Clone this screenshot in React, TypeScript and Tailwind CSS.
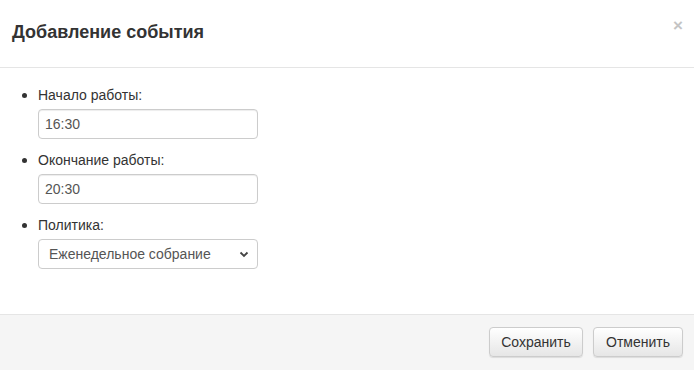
import React from 'react';

const font = { fontFamily: '"Liberation Sans", Arial, sans-serif' };

function Field({ label, children }: { label: string; children: React.ReactNode }) {
  return (
    <li className="mb-[11px] leading-5">
      <div className="h-5 leading-5 text-[14px] text-[#333]">{label}</div>
      <div className="mt-1">{children}</div>
    </li>
  );
}

export default function App() {
  return (
    <div style={font} className="w-[694px] h-[370px] bg-white flex flex-col text-[#333]">
      <div className="h-[68px] border-b border-[#e5e5e5] flex items-center pl-3 pr-3 relative">
        <h4 className="text-[18px] font-bold text-[#333] mt-[-2px]">Добавление события</h4>
        <span className="absolute right-[11px] top-[17px] text-[#c4c4c4] font-bold text-[17px] leading-none">×</span>
      </div>
      <div className="flex-1 pt-[17px]">
        <ul className="list-disc pl-[38px] marker:text-[#333]">
          <Field label="Начало работы:">
            <div className="w-[220px] h-[30px] border border-[#ccc] rounded-[4px] flex items-center px-[6px] text-[14px] text-[#555] shadow-[inset_0_1px_1px_rgba(0,0,0,0.075)]">16:30</div>
          </Field>
          <Field label="Окончание работы:">
            <div className="w-[220px] h-[30px] border border-[#ccc] rounded-[4px] flex items-center px-[6px] text-[14px] text-[#555] shadow-[inset_0_1px_1px_rgba(0,0,0,0.075)]">20:30</div>
          </Field>
          <Field label="Политика:">
            <div className="w-[220px] h-[30px] border border-[#ccc] rounded-[4px] flex items-center justify-between pl-[10px] pr-[8px] text-[14px] text-[#555]">
              <span>Еженедельное собрание</span>
              <svg width="10" height="7" viewBox="0 0 10 7" fill="none">
                <path d="M1.5 1.5 L5 5 L8.5 1.5" stroke="#444" strokeWidth="1.8" />
              </svg>
            </div>
          </Field>
        </ul>
      </div>
      <div className="h-[56px] bg-[#f5f5f5] border-t border-[#e5e5e5] flex items-center justify-end gap-[10px] pr-[11px] pb-[1px]">
        <button className="h-[30px] w-[94px] rounded-[4px] border border-[#ccc] bg-gradient-to-b from-white to-[#e6e6e6] text-[14px] text-[#333] shadow-[0_1px_1px_rgba(0,0,0,0.1)]">Сохранить</button>
        <button className="h-[30px] w-[90px] rounded-[4px] border border-[#ccc] bg-gradient-to-b from-white to-[#e6e6e6] text-[14px] text-[#333] shadow-[0_1px_1px_rgba(0,0,0,0.1)]">Отменить</button>
      </div>
    </div>
  );
}
